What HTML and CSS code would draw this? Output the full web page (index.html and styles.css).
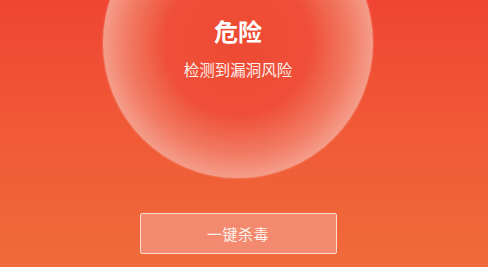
FILE: index.html
```html
<!DOCTYPE html>
<html lang="zh-CN">
<head>
    <meta charset="UTF-8">
    <meta name="viewport" content="width=device-width, initial-scale=1.0">
    <title>安全检测</title>
    <link rel="stylesheet" href="styles.css">
</head>
<body>
    <div class="stage">
        <div class="orb">
            <h1 class="status">危险</h1>
            <p class="status-desc">检测到漏洞风险</p>
        </div>
        <button class="action-btn" type="button">一键杀毒</button>
    </div>
</body>
</html>
```

FILE: styles.css
```css
html, body {
    margin: 0;
    padding: 0;
    height: 100%;
}
body {
    font-family: "Noto Sans CJK SC", "Noto Sans", sans-serif;
    background: linear-gradient(to bottom, #ef4532 0%, #f05a36 50%, #f06b3a 100%);
    overflow: hidden;
}
.stage {
    width: 476px;
    display: flex;
    flex-direction: column;
    align-items: center;
}
.orb {
    width: 270px;
    height: 270px;
    margin-top: -92px;
    border-radius: 50%;
    box-sizing: border-box;
    padding-top: 111px;
    display: flex;
    flex-direction: column;
    align-items: center;
    background: radial-gradient(circle, #ee4a34 0%, #ef4f38 38%, #f27a63 58%, #f6ab9b 76%, #f8c2b5 90%, #fad3c9 100%);
    box-shadow: 0 0 2px rgba(255, 225, 215, 0.6);
}
.status {
    margin: 0;
    font-size: 24px;
    line-height: 24px;
    font-weight: bold;
    color: #fff;
}
.status-desc {
    margin: 18px 0 0;
    font-size: 15.5px;
    line-height: 16px;
    color: #fdeee9;
}
.action-btn {
    margin-top: 35px;
    width: 197px;
    height: 41px;
    border: 1.5px solid #fcdccd;
    border-radius: 2px;
    background: #f38a70;
    color: #fdf2ec;
    font-family: inherit;
    font-size: 15px;
    letter-spacing: 0.5px;
    padding: 0;
    cursor: pointer;
}
```
